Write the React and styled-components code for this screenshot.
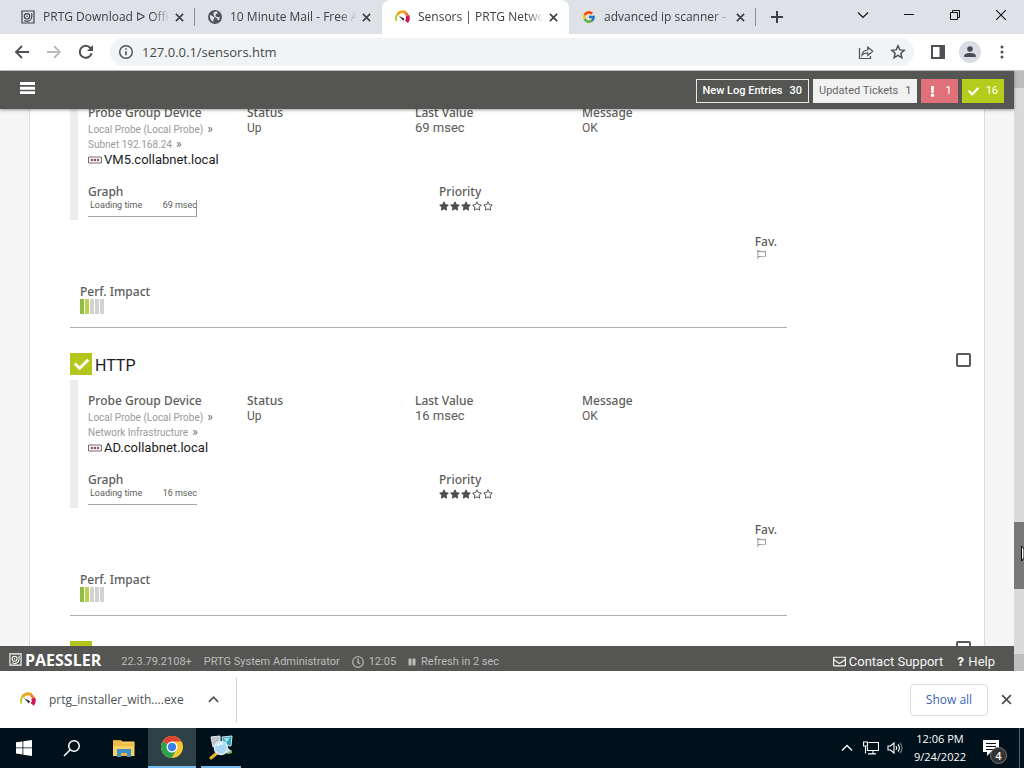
import React from "react";
import styled, { createGlobalStyle, css } from "styled-components";
import { FaStar, FaRegStar, FaRegFlag, FaCheck, FaRegClock, FaPause, FaRegEnvelope, FaQuestion, FaExclamation } from "react-icons/fa";
import { FcGoogle } from "react-icons/fc";

const ui = '"Open Sans", "Noto Sans", sans-serif';
const app = 'Roboto, "Liberation Sans", sans-serif';

const GlobalStyle = createGlobalStyle`
  * { box-sizing: border-box; }
  body { margin: 0; background: #fff; }
  button, input { font: inherit; color: inherit; margin: 0; }
  button { padding: 0; border: 0; background: none; }
  a { color: inherit; text-decoration: none; }
  svg { display: block; flex: none; }
  h2, h3, p { margin: 0; font-weight: 400; }
`;

const Screen = styled.div`
  height: 100vh;
  display: flex;
  flex-direction: column;
  overflow: hidden;
  font-family: ${ui};
`;

/* browser chrome */
const TabStrip = styled.header`
  flex: none;
  height: 34px;
  display: flex;
  padding-left: 8px;
  background: #dee1e6;
  color: #3c4043;
`;
const Tab = styled.div`
  width: 187px;
  height: 34px;
  display: flex;
  align-items: center;
  padding: 0 9px 0 13px;
  font-size: 12px;
  background: ${(p) => (p.$active ? "#fff" : "transparent")};
  border-radius: 8px 8px 0 0;
`;
const TabTitle = styled.span`
  flex: 1;
  margin: 0 2px 0 8px;
  line-height: 18px;
  white-space: nowrap;
  overflow: hidden;
  mask-image: linear-gradient(to right, #000 86%, transparent);
`;
const TabClose = styled.button`
  width: 14px;
  height: 14px;
  display: grid;
  place-items: center;
`;
const Divider = styled.span`
  width: 1px;
  height: ${(p) => p.$h}px;
  align-self: center;
  margin-left: -1px;
  background: ${(p) => p.$color};
`;
const NewTab = styled.button`
  width: 42px;
  display: grid;
  place-items: center;
`;
const WindowButtons = styled.div`
  margin-left: auto;
  display: flex;
  height: 30px;
  color: #111;
`;
const WindowButton = styled.button`
  width: 46px;
  display: grid;
  place-items: center;
`;
const Toolbar = styled.nav`
  flex: none;
  height: 37px;
  display: flex;
  align-items: center;
  padding: 0 6px;
  background: #fff;
  color: #4d5156;
  border-bottom: 1px solid #c9cbcc;
`;
const ToolButton = styled.button`
  width: 32px;
  height: 28px;
  display: grid;
  place-items: center;
  color: ${(p) => (p.$muted ? "#b9bbbe" : "inherit")};
`;
const Omnibox = styled.div`
  flex: 1;
  height: 28px;
  margin: 0 8px;
  padding: 0 0 0 8px;
  display: flex;
  align-items: center;
  border-radius: 14px;
  background: #f1f3f4;
`;
const Address = styled.input`
  flex: 1;
  min-width: 0;
  margin-left: 8px;
  border: 0;
  outline: 0;
  padding: 0;
  background: none;
  font-size: 13px;
  line-height: 20px;
  color: #45494d;
`;
const Avatar = styled.span`
  width: 22px;
  height: 22px;
  border-radius: 50%;
  display: grid;
  place-items: center;
  background: #dadde5;
`;

/* page */
const Viewport = styled.div`
  flex: 1;
  min-height: 0;
  display: flex;
`;
const Page = styled.div`
  flex: 1;
  min-width: 0;
  display: flex;
  flex-direction: column;
  font-family: ${app};
  color: #5c5c5a;
`;
const bar = css`
  flex: none;
  display: flex;
  align-items: center;
  background: #555553;
  color: #f5f5f3;
`;
const AppBar = styled.header`
  ${bar}
  height: 38px;
  padding: 2px 10px 0 20px;
  gap: 4px;
  z-index: 1;
  box-shadow: 0 1px 3px rgba(0, 0, 0, 0.4);
`;
const MenuButton = styled.button`
  width: 15px;
  height: 12px;
  margin: -6px auto 0 0;
`;
const tones = {
  outline: "background: #555553; border: 1px solid #e8e8e6; color: #fff; font-weight: 500;",
  light: "background: #f1f1f1; color: #666664;",
  red: "background: #e0707a; color: #fff;",
  green: "background: #b4cc1c; color: #fff;",
};
const Badge = styled.button`
  height: 24px;
  padding: 0 6px;
  display: flex;
  align-items: center;
  gap: 7px;
  font-size: 11px;
  line-height: 14px;
  ${(p) => tones[p.$tone]}
`;
const Content = styled.main`
  flex: 1;
  min-height: 0;
  overflow: hidden;
  padding: 0 29px;
  background: #f5f5f5;
`;
const Panel = styled.div`
  height: 100%;
  display: flow-root;
  padding: 0 13px 0 40px;
  background: #fff;
  border: 1px solid #d9dcd9;
  border-width: 0 1px;
`;
/* the list is shown part-way scrolled */
const SensorList = styled.div`
  margin-top: -17px;
`;
const Sensor = styled.article`
  display: flex;
  justify-content: space-between;
  align-items: flex-start;
  margin-bottom: 25px;
`;
const SensorMain = styled.div`
  flex: 1;
  max-width: 717px;
  border-bottom: 1px solid #adadad;
`;
const SensorHead = styled.div`
  display: flex;
  align-items: center;
  gap: 3px;
  height: 22px;
  margin-bottom: 5px;
`;
const StateIcon = styled.span`
  width: 22px;
  height: 22px;
  display: grid;
  place-items: center;
  background: #b4c61c;
  color: #fff;
`;
const SensorName = styled.h2`
  padding-top: 3px;
  font-size: 16px;
  line-height: 20px;
  color: #1c1c28;
`;
const Select = styled.input`
  appearance: none;
  width: 15px;
  height: 14px;
  border: 2px solid #5a5a58;
  border-radius: 2px;
  background: #fff;
`;
const Details = styled.div`
  height: 128px;
  padding: 13px 0 0 10px;
  border-left: 8px solid #ececec;
`;
const Facts = styled.div`
  height: 79px;
  display: grid;
  grid-template-columns: 159px 168px 167px 1fr;
`;
const Measures = styled.div`
  display: grid;
  grid-template-columns: 351px 1fr;
`;
const Extras = styled.div`
  display: flex;
  flex-direction: column;
  padding: 14px 10px 13px;
  gap: 8px;
`;
const Field = styled.div`
  ${(p) => p.$end && "align-self: flex-end;"}
  min-height: ${(p) => p.$min || 0}px;
`;
const Label = styled.h3`
  font-family: "Noto Sans", "Open Sans", sans-serif;
  font-size: 12px;
  font-weight: 500;
  line-height: 16px;
  color: #5c5c5a;
`;
const Value = styled.p`
  font-size: ${(p) => p.$size || 12}px;
  line-height: 14px;
`;
const Path = styled.div`
  padding-top: 1px;
`;
const Crumb = styled.p`
  font-size: 10px;
  line-height: 15px;
  color: #9a9a98;
`;
const Arrow = styled.span`
  margin-left: 4px;
  font-size: 12px;
  color: #6d6d6b;
`;
const Device = styled.a`
  display: flex;
  align-items: center;
  gap: 2px;
  font-size: 13px;
  line-height: 16px;
  color: #1c1c24;
`;
const Graph = styled.div`
  width: 109px;
  height: 17px;
  display: flex;
  justify-content: space-between;
  padding-left: 2px;
  border-bottom: 1px solid #a5a5ad;
  ${(p) => p.$spike && "background: linear-gradient(#98989a, #98989a) right bottom / 1px 16px no-repeat;"}
  font-size: 9px;
  line-height: 10px;
`;
const Stars = styled.div`
  display: flex;
  gap: 1px;
  padding-top: 1px;
  color: #50504c;
`;
const Flag = styled.div`
  padding-left: 2px;
  color: #8a8a88;
`;
const Impact = styled.div`
  display: flex;
  gap: 1px;
  height: 14px;
  align-items: flex-end;
`;
const ImpactBar = styled.span`
  width: 4px;
  height: 15px;
  background: ${(p) => p.$color};
`;
const Footer = styled.footer`
  ${bar}
  height: 25px;
  padding: 6px 19px 0 9px;
  font-size: 11px;
  color: #bdbdbb;
`;
const Brand = styled.span`
  display: flex;
  align-items: center;
  gap: 3px;
  margin: -4px 20px 0 0;
  font-family: ${ui};
  font-size: 16px;
  font-weight: 700;
  line-height: 18px;
  color: #fff;
`;
const FootItem = styled.span`
  display: flex;
  align-items: center;
  gap: 5px;
  margin-right: 12px;
  white-space: nowrap;
`;
const FootLink = styled.a`
  display: flex;
  align-items: center;
  gap: 3px;
  margin-left: 13px;
  font-size: 13px;
  color: #f6f6f3;
`;
const Spacer = styled.span`
  flex: ${(p) => p.$grow || 1};
`;

/* scroll bar */
const ScrollTrack = styled.div`
  flex: none;
  width: 10px;
  display: flex;
  flex-direction: column;
  background: #dadada;
`;
const ScrollCap = styled.span`
  height: 17px;
  background: #bdbdbd;
`;
const ScrollThumb = styled.div`
  position: relative;
  height: 67px;
  background: #787878;
`;
const Pointer = styled.svg`
  position: absolute;
  right: 0;
  top: 23px;
`;

/* downloads shelf */
const Shelf = styled.section`
  flex: none;
  height: 57px;
  display: flex;
  align-items: center;
  padding: 0 11px 0 20px;
  background: #fff;
  color: #4d5156;
  font-size: 13px;
`;
const FileName = styled.button`
  width: 136px;
  margin: 0 22px 0 13px;
  text-align: left;
  font-size: 12px;
  line-height: 18px;
  white-space: nowrap;
`;
const ShelfToggle = styled.button`
  width: 12px;
  height: 12px;
  display: grid;
  place-items: center;
  margin-right: 18px;
`;
const ShowAll = styled.button`
  width: 78px;
  height: 32px;
  margin: 0 11px 0 auto;
  border: 1px solid #dadce0;
  border-radius: 4px;
  font-size: 12px;
  font-weight: 500;
  color: #3c66b4;
`;

/* task bar */
const TaskBar = styled.footer`
  flex: none;
  height: 40px;
  display: flex;
  background: #00111c;
  color: #fff;
`;
const Task = styled.button`
  width: 48px;
  height: 40px;
  display: grid;
  place-items: center;
  background: ${(p) => (p.$active ? "#2d4048" : "none")};
  border-bottom: ${(p) => (p.$active ? "2px solid #76b9ed" : "0")};
`;
const RunningTask = styled(Task)`
  width: 40px;
  margin-left: 5px;
  border-bottom: 2px solid #76b9ed;
`;
const PinnedTasks = styled.div`
  display: flex;
  margin-left: 4px;
`;
const Tray = styled.div`
  margin-left: auto;
  display: flex;
  align-items: center;
`;
const TrayButton = styled.button`
  width: 24px;
  height: 40px;
  display: grid;
  place-items: center;
`;
const Clock = styled.time`
  width: 66px;
  text-align: center;
  font-size: 11px;
  line-height: 18px;
`;
const Notices = styled.button`
  position: relative;
  width: 28px;
  height: 40px;
  margin: 0 10px 0 8px;
  display: grid;
  place-items: center start;
  padding-left: 2px;
`;
const Count = styled.span`
  position: absolute;
  right: 2px;
  bottom: 4px;
  width: 17px;
  height: 17px;
  border: 1px solid #777;
  border-radius: 50%;
  background: #333;
  font-size: 11px;
  font-weight: 600;
  line-height: 15px;
`;
const Edge = styled.span`
  width: 5px;
  height: 40px;
  border-left: 1px solid #56626a;
`;

const Cross = ({ size = 9, w = 1.8 }) => (
  <svg width={size} height={size} viewBox="0 0 10 10" stroke="currentColor" strokeWidth={w}>
    <path d="M1 1l8 8M9 1l-8 8" />
  </svg>
);
const PaesslerMark = ({ size = 14 }) => (
  <svg width={size} height={size} viewBox="0 0 14 14" fill="none" stroke="currentColor">
    <path d="M1 1h12v12H1z" strokeWidth="1.2" />
    <path d="M3.2 10.4c3.5 2 7.6 0 7.6-3.6V3" strokeWidth="1.1" />
    <circle cx="6" cy="6.3" r="2.7" strokeWidth="1.1" />
    <circle cx="6" cy="6.3" r=".8" fill="currentColor" stroke="none" />
  </svg>
);
const GaugeMark = ({ size = 16 }) => (
  <svg width={size} height={size} viewBox="0 0 16 16" fill="none">
    <path d="M1.7 11.5A6.4 6.4 0 0 1 2.5 4.7" stroke="#b6cc28" strokeWidth="2" />
    <path d="M2.5 5A6.5 6.5 0 0 1 11.5 2.8" stroke="#eda51c" strokeWidth="3" />
    <path d="M10.8 3a6 6 0 0 1 2.8 4" stroke="#ef7d32" strokeWidth="3" />
    <path d="M13.2 6.2a6.3 6.3 0 0 1-.9 6.4" stroke="#cf1755" strokeWidth="4" />
    <path d="M4 6l6.2 3.2-1.4 2.3z" fill="#26303c" />
  </svg>
);
const Globe = () => (
  <svg width="14" height="14" viewBox="0 0 14 14">
    <circle cx="7" cy="7" r="7" fill="#50555a" />
    <path d="M2 5l3 1.2L6.5 8 5 10.5 6 12C3 11 1.3 8 2 5zM6 2l3-.5 1 1.8-2 .8L7.4 6 9 7l2.8.3L11 10.5l-1.3-.6L9 8.2 6.6 7 5.4 4.6z" fill="#dee1e6" />
  </svg>
);
const BackArrow = ({ flip }) => (
  <svg width="16" height="16" viewBox="0 0 16 16" fill="none" stroke="currentColor" strokeWidth="1.8">
    {flip ? <path d="M1 8h13M8 2l6 6-6 6" /> : <path d="M15 8H2M8 2L2 8l6 6" />}
  </svg>
);
const Reload = () => (
  <svg width="16" height="16" viewBox="0 0 16 16" fill="none" stroke="currentColor" strokeWidth="2">
    <path d="M13.6 9.3A6 6 0 1 1 12.4 4l1 1.2" />
    <path d="M15 1v6H9z" fill="currentColor" stroke="none" />
  </svg>
);
const Info = () => (
  <svg width="16" height="16" viewBox="0 0 16 16" fill="none" stroke="currentColor" strokeWidth="1.4">
    <circle cx="8" cy="8" r="6.3" />
    <path d="M8 7.2v4M8 4.2v1.6" strokeWidth="1.6" />
  </svg>
);
const Share = () => (
  <svg width="16" height="16" viewBox="0 0 16 16" fill="none" stroke="currentColor" strokeWidth="1.2">
    <path d="M1.5 4v10.5h11V12" />
    <path d="M4 11.2c.4-3.4 2.4-5 5.8-5.2V3l5 4.3-5 4.2V8.8C7.2 8.8 5.5 9.4 4 11.2z" />
  </svg>
);
const StarOutline = () => (
  <svg width="16" height="16" viewBox="0 0 16 16" fill="none" stroke="currentColor" strokeWidth="1.5">
    <path d="M8 1.8l1.8 4.1 4.4.4-3.3 3 1 4.3L8 11.3l-3.9 2.3 1-4.3-3.3-3 4.4-.4z" />
  </svg>
);
const SidePanel = () => (
  <svg width="14" height="14" viewBox="0 0 14 14">
    <path d="M1 1h12v12H1z" fill="none" stroke="currentColor" strokeWidth="2" />
    <path d="M8.5 1H13v12H8.5z" fill="currentColor" />
  </svg>
);
const Person = () => (
  <svg width="14" height="14" viewBox="0 0 14 14" fill="#474c56">
    <circle cx="7" cy="4" r="2.8" />
    <path d="M1.2 12V10.6C1.2 8.8 4.8 8 7 8s5.8.8 5.8 2.6V12z" />
  </svg>
);
const Kebab = () => (
  <svg width="4" height="14" viewBox="0 0 4 14" fill="currentColor">
    <circle cx="2" cy="2" r="1.5" /><circle cx="2" cy="7" r="1.5" /><circle cx="2" cy="12" r="1.5" />
  </svg>
);
const Chevron = ({ up, w = 1.3, size = 12 }) => (
  <svg width={size} height={size} viewBox="0 0 12 12" fill="none" stroke="currentColor" strokeWidth={w}>
    <path d={up ? "M1 8.5l5-5 5 5" : "M1 3.5l5 5 5-5"} />
  </svg>
);
const DeviceIcon = () => (
  <svg width="14" height="8" viewBox="0 0 14 8">
    <path d="M.5 1h13v6H.5z" fill="#f4f0f0" stroke="#777174" />
    <path d="M3 3h2v2H3zM6 3h2v2H6zM9 3h2v2H9z" fill="#7c5058" />
  </svg>
);
const WindowsLogo = () => (
  <svg width="16" height="16" viewBox="0 0 16 16" fill="#fff">
    <path d="M0 2.3L6.5 1.4v6.1H0zM7.3 1.3L16 0v7.5H7.3zM0 8.3h6.5v6.2L0 13.6zM7.3 8.3H16V16l-8.7-1.3z" />
  </svg>
);
const SearchIcon = () => (
  <svg width="18" height="18" viewBox="0 0 18 18" fill="none" stroke="#fff" strokeWidth="1.5">
    <circle cx="11" cy="7" r="5.3" /><path d="M7.2 10.8L1 17" />
  </svg>
);
const Explorer = () => (
  <svg width="24" height="20" viewBox="0 0 24 20">
    <path d="M1 2h8l1.5 2H1z" fill="#d69f2c" />
    <path d="M1 3.5h21.5V18H1z" fill="#f9d266" />
    <path d="M1 3.5h8l1 2h12.5V8H1z" fill="#eebc45" />
    <path d="M5 11h14v8h-4v-4H9v4H5z" fill="#3d91c6" />
    <path d="M9 15h6v3H9z" fill="#eab447" />
  </svg>
);
const Chrome = () => (
  <svg width="24" height="24" viewBox="0 0 24 24">
    <circle cx="12" cy="12" r="11" fill="#f6c62d" />
    <path d="M12 12L2.5 6.5A11 11 0 0 1 21.5 6.5H12z" fill="#df4436" />
    <path d="M12 12L2.5 6.5A11 11 0 0 0 11.5 23l5.2-8.5z" fill="#2ba14f" />
    <circle cx="12" cy="12" r="5.5" fill="#fff" />
    <circle cx="12" cy="12" r="4.2" fill="#397fe8" />
  </svg>
);
const ScannerIcon = () => (
  <svg width="26" height="26" viewBox="0 0 26 26">
    <path d="M3 3l9-1v9l-7 2z" fill="#b8c4ca" stroke="#e9eff2" />
    <path d="M14 3l10-1-1 10-8-1z" fill="#27a6bd" stroke="#d5e5ea" />
    <path d="M16 4l6-.5-4 6z" fill="#9be0e3" />
    <path d="M18 13l6 4-4 3-5-3z" fill="#cdd9dc" />
    <path d="M20 19l4-1" stroke="#69b957" strokeWidth="2" />
    <path d="M9 19l-6 5" stroke="#e8b32d" strokeWidth="3" strokeLinecap="round" />
    <circle cx="13" cy="14" r="6.5" fill="#a9d6f1" stroke="#dceaf4" strokeWidth="1.5" />
    <path d="M9 12a5 5 0 0 1 6-2" stroke="#e9f8ff" strokeWidth="2" fill="none" />
  </svg>
);
const Network = () => (
  <svg width="16" height="14" viewBox="0 0 16 14" fill="none" stroke="#fff" strokeWidth="1.1">
    <path d="M5.5 1.5h10v8h-11V6M.5 1h4v4h-4zM2.5 5v7.5M10 9.5v3M5 12.9h8" />
  </svg>
);
const Sound = () => (
  <svg width="16" height="14" viewBox="0 0 16 14" fill="none" stroke="#fff" strokeWidth="1.1">
    <path d="M1 5h2.5L7 2v10L3.5 9H1zM9 5q1.5 2 0 4M11 3.3q2.8 3.7 0 7.4" />
    <path d="M13 1.8q4 5.2 0 10.4" stroke="#78858c" />
  </svg>
);
const Note = () => (
  <svg width="17" height="18" viewBox="0 0 17 18">
    <path d="M0 1h16v12H8l-4 4v-4H0z" fill="#fff" />
    <path d="M3 4.5h10M3 7.5h10M3 10.5h7" stroke="#00111c" />
  </svg>
);

const tabs = [
  { title: "PRTG Download ᐅ Offi", icon: <PaesslerMark /> },
  { title: "10 Minute Mail - Free A", icon: <Globe />, divided: true },
  { title: "Sensors | PRTG Networ", icon: <GaugeMark size={15} />, active: true },
  { title: "advanced ip scanner -", icon: <FcGoogle size={14} /> },
];
const impactColors = ["#92bd45", "#b9d24c", "#d2d2d2", "#d2d2d2", "#d2d2d2"];
const sensors = [
  { id: "vm5", group: "Subnet 192.168.24", device: "VM5.collabnet.local", value: "69 msec", spike: true },
  { id: "ad", name: "HTTP", group: "Network Infrastructure", device: "AD.collabnet.local", value: "16 msec" },
];

function SensorCard({ name, group, device, value, spike }) {
  return (
    <Sensor>
      <SensorMain>
        {name && (
          <SensorHead>
            <StateIcon><FaCheck size={15} /></StateIcon>
            <SensorName>{name}</SensorName>
          </SensorHead>
        )}
        <Details>
          <Facts>
            <Field>
              <Label>Probe Group Device</Label>
              <Path>
                <Crumb>Local Probe (Local Probe)<Arrow>»</Arrow></Crumb>
                <Crumb>{group}<Arrow>»</Arrow></Crumb>
                <Device href="#device"><DeviceIcon />{device}</Device>
              </Path>
            </Field>
            <Field><Label>Status</Label><Value>Up</Value></Field>
            <Field><Label>Last Value</Label><Value $size={13}>{value}</Value></Field>
            <Field><Label>Message</Label><Value>OK</Value></Field>
          </Facts>
          <Measures>
            <Field>
              <Label>Graph</Label>
              <Graph $spike={spike}><span>Loading time</span><span>{value}</span></Graph>
            </Field>
            <Field>
              <Label>Priority</Label>
              <Stars>
                {[1, 2, 3, 4, 5].map((n) => (n <= 3 ? <FaStar key={n} size={10} /> : <FaRegStar key={n} size={10} />))}
              </Stars>
            </Field>
          </Measures>
        </Details>
        <Extras>
          <Field $end $min={42}><Label>Fav.</Label><Flag><FaRegFlag size={9} /></Flag></Field>
          <Field>
            <Label>Perf. Impact</Label>
            <Impact>{impactColors.map((c, i) => <ImpactBar key={i} $color={c} />)}</Impact>
          </Field>
        </Extras>
      </SensorMain>
      {name && <Select type="checkbox" aria-label={`Select ${name}`} />}
    </Sensor>
  );
}

export default function App() {
  return (
    <Screen>
      <GlobalStyle />
      <TabStrip>
        {tabs.map((t) => (
          <React.Fragment key={t.title}>
            {t.divided && <Divider $h={18} $color="#8b8e92" />}
            <Tab $active={t.active}>
              {t.icon}
              <TabTitle>{t.title}</TabTitle>
              <TabClose aria-label="Close tab"><Cross /></TabClose>
            </Tab>
          </React.Fragment>
        ))}
        <Divider $h={18} $color="#8b8e92" />
        <NewTab aria-label="New tab">
          <svg width="12" height="12" viewBox="0 0 12 12" stroke="currentColor" strokeWidth="2"><path d="M6 0v12M0 6h12" /></svg>
        </NewTab>
        <WindowButtons>
          <WindowButton aria-label="Search tabs"><Chevron w={1.1} /></WindowButton>
          <WindowButton aria-label="Minimize">
            <svg width="10" height="2" viewBox="0 0 10 2"><path d="M0 0h10v1H0z" fill="currentColor" /></svg>
          </WindowButton>
          <WindowButton aria-label="Restore">
            <svg width="10" height="10" viewBox="0 0 10 10" fill="none" stroke="currentColor"><path d="M.5 2.5h7v7h-7zM2.5 2.5v-2h7v7h-2" /></svg>
          </WindowButton>
          <WindowButton aria-label="Close"><Cross size={12} w={0.9} /></WindowButton>
        </WindowButtons>
      </TabStrip>
      <Toolbar>
        <ToolButton aria-label="Back"><BackArrow /></ToolButton>
        <ToolButton aria-label="Forward" $muted><BackArrow flip /></ToolButton>
        <ToolButton aria-label="Reload"><Reload /></ToolButton>
        <Omnibox>
          <Info />
          <Address aria-label="Address" defaultValue="127.0.0.1/sensors.htm" />
          <ToolButton aria-label="Share"><Share /></ToolButton>
          <ToolButton aria-label="Bookmark"><StarOutline /></ToolButton>
        </Omnibox>
        <ToolButton aria-label="Side panel"><SidePanel /></ToolButton>
        <ToolButton aria-label="Profile"><Avatar><Person /></Avatar></ToolButton>
        <ToolButton aria-label="Menu"><Kebab /></ToolButton>
      </Toolbar>

      <Viewport>
        <Page>
          <AppBar>
            <MenuButton aria-label="Main menu">
              <svg width="15" height="12" viewBox="0 0 15 12" fill="#fff"><path d="M0 0h15v3H0zM0 4.7h15v3H0zM0 9.3h15v3H0z" /></svg>
            </MenuButton>
            <Badge $tone="outline">New Log Entries <span>30</span></Badge>
            <Badge $tone="light">Updated Tickets <span>1</span></Badge>
            <Badge $tone="red"><FaExclamation size={11} /><span>1</span></Badge>
            <Badge $tone="green"><FaCheck size={11} /><span>16</span></Badge>
          </AppBar>
          <Content>
            <Panel>
              <SensorList>
                {sensors.map((s) => <SensorCard key={s.id} {...s} />)}
                <Sensor>
                  <StateIcon />
                  <Select type="checkbox" aria-label="Select sensor" />
                </Sensor>
              </SensorList>
            </Panel>
          </Content>
          <Footer>
            <Brand><PaesslerMark size={13} />PAESSLER</Brand>
            <FootItem>22.3.79.2108+</FootItem>
            <FootItem>PRTG System Administrator</FootItem>
            <FootItem><FaRegClock size={12} />12:05</FootItem>
            <FootItem><FaPause size={8} />Refresh in 2 sec</FootItem>
            <Spacer />
            <FootLink href="#support"><FaRegEnvelope size={13} />Contact Support</FootLink>
            <FootLink href="#help"><FaQuestion size={9} />Help</FootLink>
          </Footer>
        </Page>
        <ScrollTrack>
          <ScrollCap />
          <Spacer $grow={87} />
          <ScrollThumb>
            <Pointer width="3" height="18" viewBox="0 0 3 18"><path d="M.5 1v15l2.5-3V4z" fill="#fff" stroke="#000" /></Pointer>
          </ScrollThumb>
          <Spacer $grow={13} />
          <ScrollCap />
        </ScrollTrack>
      </Viewport>

      <Shelf>
        <GaugeMark />
        <FileName>prtg_installer_with....exe</FileName>
        <ShelfToggle aria-label="Download options"><Chevron up w={1.8} size={11} /></ShelfToggle>
        <Divider $h={44} $color="#d0d2d5" />
        <ShowAll>Show all</ShowAll>
        <TabClose aria-label="Close downloads"><Cross size={11} w={1.6} /></TabClose>
      </Shelf>

      <TaskBar>
        <Task aria-label="Start"><WindowsLogo /></Task>
        <Task aria-label="Search"><SearchIcon /></Task>
        <PinnedTasks>
          <Task aria-label="File Explorer"><Explorer /></Task>
          <Task aria-label="Chrome" $active><Chrome /></Task>
          <RunningTask aria-label="IP scanner"><ScannerIcon /></RunningTask>
        </PinnedTasks>
        <Tray>
          <TrayButton aria-label="Hidden icons"><Chevron up /></TrayButton>
          <TrayButton aria-label="Network"><Network /></TrayButton>
          <TrayButton aria-label="Volume"><Sound /></TrayButton>
          <Clock>12:06 PM<br />9/24/2022</Clock>
          <Notices aria-label="Notifications"><Note /><Count>4</Count></Notices>
          <Edge />
        </Tray>
      </TaskBar>
    </Screen>
  );
}
